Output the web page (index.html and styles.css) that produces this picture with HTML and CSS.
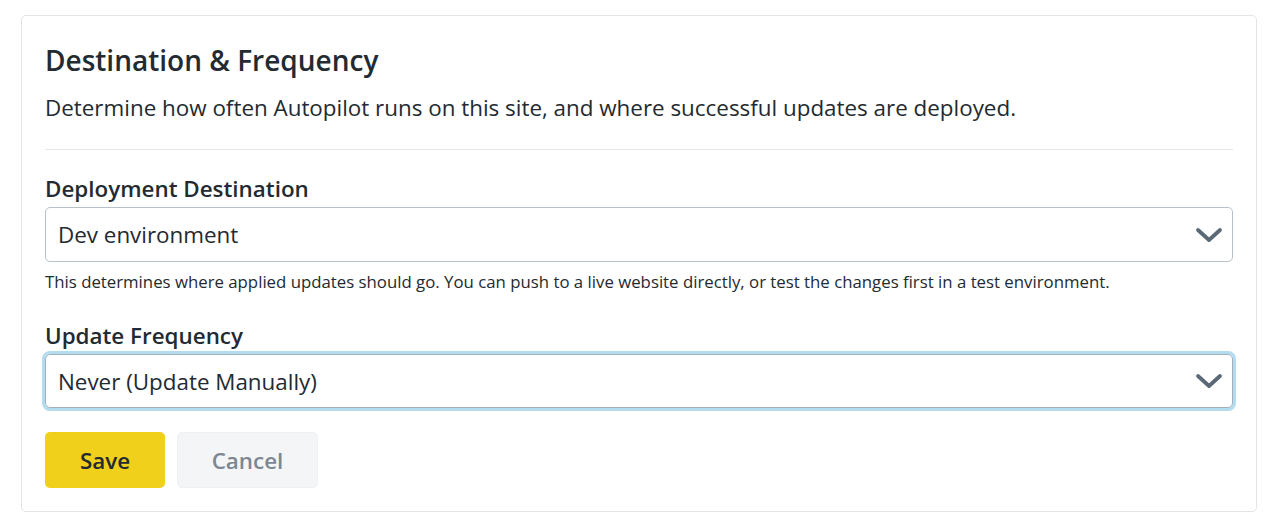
FILE: index.html
```html
<!DOCTYPE html>
<html>
<head>
<meta charset="utf-8">
<link rel="stylesheet" href="styles.css">
</head>
<body>
<div class="page">
  <section class="card">
    <h2 class="title">Destination &amp; Frequency</h2>
    <p class="desc">Determine how often Autopilot runs on this site, and where successful updates are deployed.</p>
    <hr class="sep">
    <div class="field first">
      <label class="label">Deployment Destination</label>
      <div class="select">
        <span>Dev environment</span>
        <svg class="chev" width="28" height="16" viewBox="0 0 28 16"><path d="M3 3 L14 13 L25 3" fill="none" stroke="#5b6977" stroke-width="3.8" stroke-linecap="round" stroke-linejoin="round"/></svg>
      </div>
      <p class="help">This determines where applied updates should go. You can push to a live website directly, or test the changes first in a test environment.</p>
    </div>
    <div class="field second">
      <label class="label">Update Frequency</label>
      <div class="select focus">
        <span>Never (Update Manually)</span>
        <svg class="chev" width="28" height="16" viewBox="0 0 28 16"><path d="M3 3 L14 13 L25 3" fill="none" stroke="#5b6977" stroke-width="3.8" stroke-linecap="round" stroke-linejoin="round"/></svg>
      </div>
    </div>
    <div class="actions">
      <button class="btn save">Save</button>
      <button class="btn cancel">Cancel</button>
    </div>
  </section>
</div>
</body>
</html>
```
FILE: styles.css
```css
* { box-sizing: border-box; }
html, body { margin: 0; padding: 0; background: #fff; }
body { font-family: "Open Sans", "Noto Sans", sans-serif; color: #232a31; }
.page { padding: 15px 16px 14px 21px; }
.card {
  border: 1px solid #e1e5e7;
  border-radius: 5px;
  padding: 24px 23px 23px 23px;
  background: #fff;
}
.title {
  margin: 0;
  font-size: 28px;
  font-weight: 600;
  line-height: 40px;
  color: #232a31;
}
.desc {
  margin: 12px 0 0 0;
  font-size: 22.4px;
  line-height: 32px;
  color: #232a31;
}
.sep {
  border: 0;
  border-top: 1px solid #e3e6e8;
  margin: 25px 0 0 0;
}
.field { display: flex; flex-direction: column; }
.label {
  font-size: 22.4px;
  font-weight: 600;
  line-height: 32px;
  color: #232a31;
}
.field.first .label { margin-top: 23px; }
.field.second .label { margin-top: 26px; }
.select {
  margin-top: 2px;
  height: 55px;
  border: 1px solid #b6c1cb;
  border-radius: 5px;
  display: flex;
  align-items: center;
  justify-content: space-between;
  padding: 0 9px 0 12px;
  font-size: 22.4px;
  color: #232a31;
}
.select.focus {
  border: 1px solid #a3afba;
  box-shadow: 0 0 0 3px #b3dcf0;
  height: 54px;
  margin-top: 2px;
}
.chev { display: block; }
.help {
  margin: 8px 0 0 0;
  font-size: 16.8px;
  line-height: 24px;
  color: #232a31;
}
.actions {
  display: flex;
  gap: 12px;
  margin-top: 24px;
}
.btn {
  font-family: "Open Sans", "Noto Sans", sans-serif;
  font-size: 22.4px;
  font-weight: 600;
  height: 56px;
  border-radius: 5px;
  border: 0;
  cursor: pointer;
}
.save {
  width: 120px;
  background: #f0d01b;
  color: #232a31;
}
.cancel {
  width: 141px;
  background: #f4f5f6;
  color: #7c8792;
  border: 1px solid #eef0f2;
}
```
